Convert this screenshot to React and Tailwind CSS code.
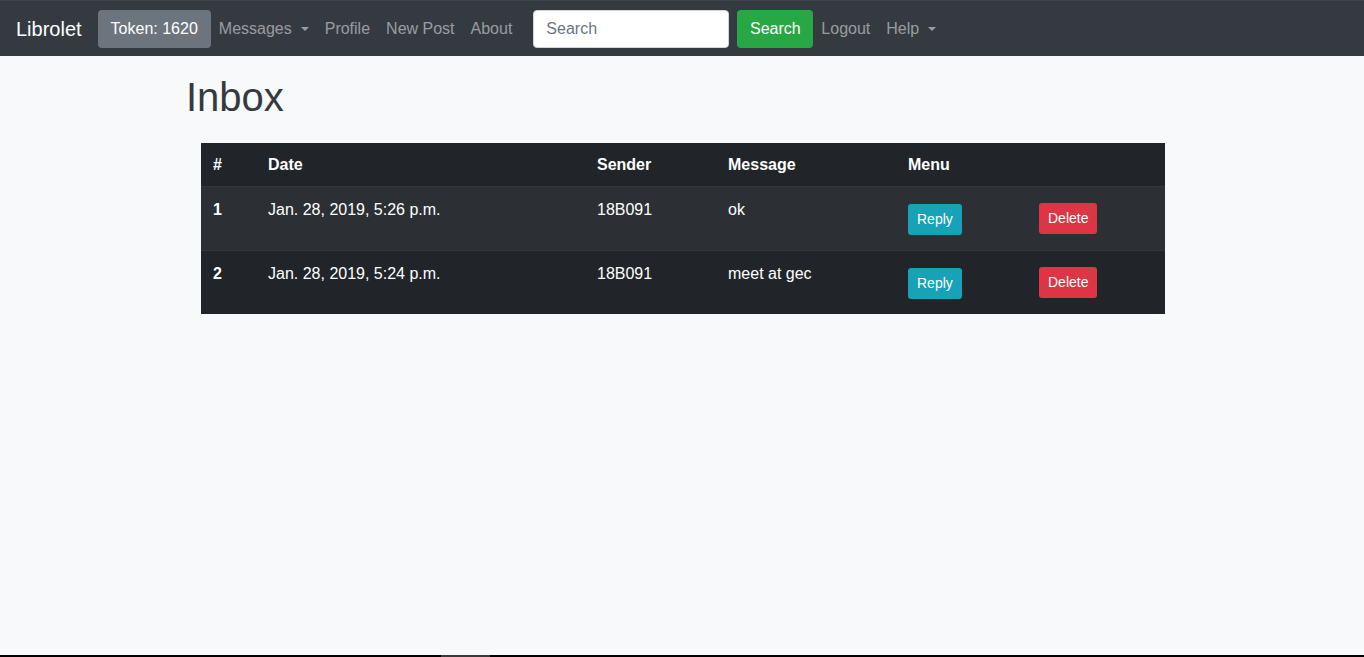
import React from "react";

const Caret = () => (
  <span className="inline-block w-0 h-0 ml-[9px] align-[3px] border-t-[4px] border-t-current border-x-[4px] border-x-transparent"></span>
);

const messages = [
  { id: 1, date: "Jan. 28, 2019, 5:26 p.m.", sender: "18B091", text: "ok" },
  { id: 2, date: "Jan. 28, 2019, 5:24 p.m.", sender: "18B091", text: "meet at gec" },
];

export default function App() {
  return (
    <div
      className="h-screen flex flex-col bg-[#f8f9fa]"
      style={{ fontFamily: '"Liberation Sans", Arial, sans-serif' }}
    >
      {/* Navbar */}
      <nav className="h-[56px] shrink-0 bg-[#343a40] border-t border-[#3f444a] flex items-center px-4 text-base">
        <span className="text-white text-[20px] mr-4">Librolet</span>
        <button className="h-[38px] px-[13px] rounded bg-[#6c757d] text-white text-base">
          Token: 1620
        </button>
        <div className="flex items-center text-white/50">
          <span className="px-2 flex items-center">
            Messages
            <Caret />
          </span>
          <span className="px-2">Profile</span>
          <span className="px-2">New Post</span>
          <span className="px-2">About</span>
        </div>
        <div className="flex items-center ml-[13px]">
          <input
            type="text"
            placeholder="Search"
            className="w-[196px] h-[38px] px-3 bg-white rounded border border-[#ced4da] text-base text-[#495057] placeholder:text-[#6c757d] outline-none"
          />
          <button className="ml-2 h-[38px] w-[76px] rounded bg-[#28a745] text-white text-base">
            Search
          </button>
        </div>
        <div className="flex items-center text-white/50">
          <span className="px-2">Logout</span>
          <span className="px-2 flex items-center">
            Help
            <Caret />
          </span>
        </div>
      </nav>

      {/* Main */}
      <main className="flex-1">
        <h1 className="ml-[186px] mt-[17px] text-[40px] leading-[48px] text-[#343a40]">
          Inbox
        </h1>

        <table className="ml-[201px] mt-[22px] w-[964px] table-fixed border-collapse text-white text-base leading-6 bg-[#212529]">
          <colgroup>
            <col className="w-[55px]" />
            <col className="w-[329px]" />
            <col className="w-[131px]" />
            <col className="w-[180px]" />
            <col className="w-[131px]" />
            <col className="w-[138px]" />
          </colgroup>
          <thead>
            <tr className="h-[43px] text-left align-top">
              <th className="px-3 pt-[10px] font-bold">#</th>
              <th className="px-3 pt-[10px] font-bold">Date</th>
              <th className="px-3 pt-[10px] font-bold">Sender</th>
              <th className="px-3 pt-[10px] font-bold">Message</th>
              <th className="px-3 pt-[10px] font-bold">Menu</th>
              <th className="px-3"></th>
            </tr>
          </thead>
          <tbody>
            {messages.map((m, i) => (
              <tr
                key={m.id}
                className={`border-t border-[#32383e] align-top ${
                  i % 2 === 0 ? "bg-[#2c3034]" : "bg-[#212529]"
                }`}
              >
                <td className="px-3 pt-[11px] h-[64px] font-bold">{m.id}</td>
                <td className="px-3 pt-[11px]">{m.date}</td>
                <td className="px-3 pt-[11px]">{m.sender}</td>
                <td className="px-3 pt-[11px]">{m.text}</td>
                <td className="px-3 pt-[17px]">
                  <button className="h-[31px] px-[9px] rounded-[3px] bg-[#17a2b8] text-white text-sm">
                    Reply
                  </button>
                </td>
                <td className="px-3 pt-[16px]">
                  <button className="h-[31px] px-[9px] rounded-[3px] bg-[#dc3545] text-white text-sm">
                    Delete
                  </button>
                </td>
              </tr>
            ))}
          </tbody>
        </table>
      </main>

      {/* bottom strip */}
      <div className="h-[2px] shrink-0 bg-black flex">
        <div className="ml-[441px] w-[49px] bg-[#3a3a3a]"></div>
      </div>
    </div>
  );
}
